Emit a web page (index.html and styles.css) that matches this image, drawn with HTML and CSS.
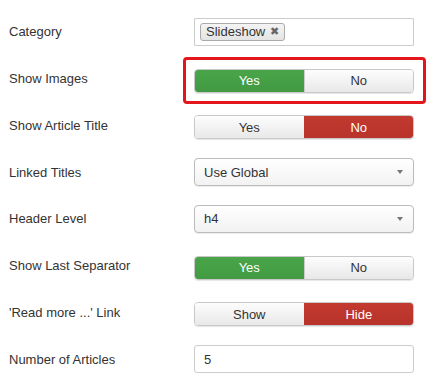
FILE: index.html
```html
<!doctype html>
<html lang="en">
<head>
    <meta charset="utf-8">
    <title>Module Options</title>
    <link rel="stylesheet" href="styles.css">
</head>
<body>
    <div class="options">
        <div class="row">
            <label class="label">Category</label>
            <div class="control tags">
                <span class="tag">Slideshow <span class="tag-x">&#10006;</span></span>
            </div>
        </div>
        <div class="row">
            <label class="label">Show Images</label>
            <div class="toggle highlight">
                <span class="opt on-yes">Yes</span>
                <span class="opt">No</span>
            </div>
        </div>
        <div class="row">
            <label class="label">Show Article Title</label>
            <div class="toggle">
                <span class="opt">Yes</span>
                <span class="opt on-no">No</span>
            </div>
        </div>
        <div class="row">
            <label class="label">Linked Titles</label>
            <div class="control select">Use Global<span class="caret"></span></div>
        </div>
        <div class="row">
            <label class="label">Header Level</label>
            <div class="control select">h4<span class="caret"></span></div>
        </div>
        <div class="row">
            <label class="label">Show Last Separator</label>
            <div class="toggle">
                <span class="opt on-yes">Yes</span>
                <span class="opt">No</span>
            </div>
        </div>
        <div class="row">
            <label class="label">'Read more ...' Link</label>
            <div class="toggle">
                <span class="opt">Show</span>
                <span class="opt on-no">Hide</span>
            </div>
        </div>
        <div class="row">
            <label class="label">Number of Articles</label>
            <div class="control text">5</div>
        </div>
    </div>
</body>
</html>
```

FILE: styles.css
```css
body {
    margin: 0;
    background: #fff;
    font-family: "Liberation Sans", Arial, sans-serif;
    font-size: 13px;
    color: #333;
}
.options {
    padding-top: 8.5px;
}
.row {
    display: flex;
    align-items: center;
    height: 46.75px;
}
.label {
    width: 194px;
    padding-left: 9px;
    box-sizing: border-box;
    flex: none;
}
.control {
    width: 220px;
    height: 28px;
    box-sizing: border-box;
    border: 1px solid #ccc;
    display: flex;
    align-items: center;
    padding: 0 9px;
    color: #333;
}
.tags {
    border-radius: 1px;
    padding: 0 5px;
}
.tag {
    display: inline-flex;
    align-items: center;
    height: 18px;
    box-sizing: border-box;
    padding: 0 5px 0 5px;
    border: 1px solid #aaa;
    border-radius: 3px;
    background: linear-gradient(#f4f4f4, #e4e4e4);
    color: #333;
}
.tag-x {
    font-size: 11px;
    color: #666;
    margin-left: 5px;
}
.select {
    border-color: #bbb;
    border-radius: 4px;
    background: linear-gradient(#fff, #f2f2f2);
    justify-content: space-between;
    padding-right: 10px;
    box-shadow: 0 1px 1px rgba(0, 0, 0, 0.08);
}
.caret {
    width: 0;
    height: 0;
    border-left: 3px solid transparent;
    border-right: 3px solid transparent;
    border-top: 4px solid #777;
}
.text {
    border-radius: 3px;
    border-color: #ccc;
}
.toggle {
    width: 220px;
    height: 24px;
    margin-top: 4px;
    display: flex;
    border: 1px solid #c8c8c8;
    border-radius: 4px;
    box-sizing: border-box;
    overflow: hidden;
    position: relative;
    box-shadow: 0 1px 1px rgba(0, 0, 0, 0.1);
}
.opt {
    flex: 1;
    display: flex;
    align-items: center;
    justify-content: center;
    background: linear-gradient(#fdfdfd, #e8e8e8);
    color: #333;
}
.opt + .opt {
    border-left: 1px solid #ccc;
}
.on-yes {
    background: linear-gradient(#4aa54a, #419a41);
    color: #fff;
}
.on-no {
    background: linear-gradient(#c2392f, #b8332b);
    color: #fff;
}
.opt.on-no, .opt.on-yes {
    border-left-color: transparent;
}
.highlight {
    overflow: visible;
}
.highlight::after {
    content: "";
    position: absolute;
    top: -13px;
    bottom: -12px;
    left: -12px;
    right: -13px;
    border: 3px solid #e3161b;
    border-radius: 4px;
}
.highlight .opt:first-child {
    border-radius: 3px 0 0 3px;
}
.highlight .opt:last-child {
    border-radius: 0 3px 3px 0;
}
```
